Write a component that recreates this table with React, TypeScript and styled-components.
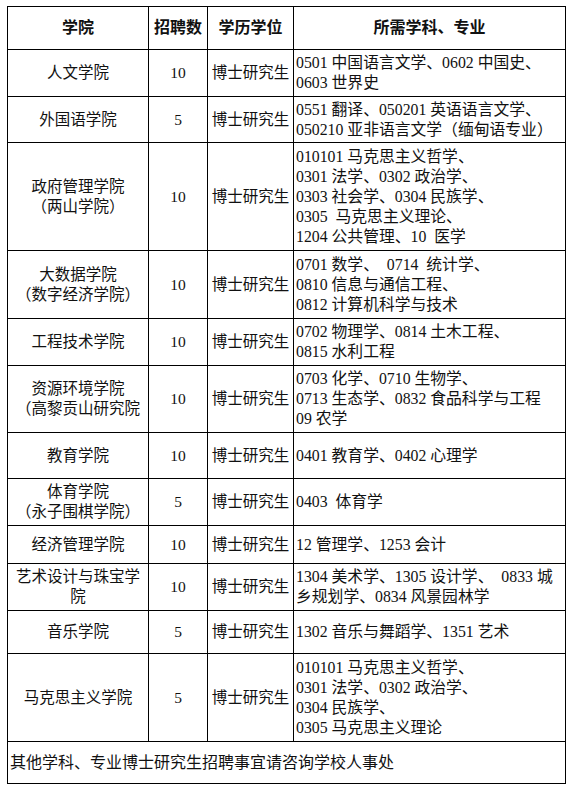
import React from "react";
import styled, { createGlobalStyle } from "styled-components";

const Global = createGlobalStyle`
  html, body { margin: 0; padding: 0; background: #fff; }
  body { font-family: "Liberation Serif", "Noto Sans CJK SC", serif; color: #111; }
`;

const Page = styled.div`
  padding: 6px 0 0 7px;
`;

const Table = styled.table`
  border-collapse: collapse;
  table-layout: fixed;
  width: 558px;
  font-size: 15.5px;
  line-height: 20px;
`;

const Row = styled.tr<{ $h: number }>`
  height: ${(p) => p.$h}px;
`;

const Head = styled.th`
  border: 1px solid #000;
  font-family: "Liberation Serif", "Noto Sans CJK SC", serif;
  font-weight: 700;
  font-size: 16px;
  padding: 0;
  text-align: center;
  vertical-align: middle;
`;

const Cell = styled.td<{ $align?: "left" | "center"; $size?: number }>`
  border: 1px solid #000;
  padding: 0 2px;
  font-size: ${(p) => p.$size ?? 15.5}px;
  text-align: ${(p) => p.$align ?? "center"};
  vertical-align: middle;
  overflow: hidden;
`;

const Line = styled.div`
  white-space: pre;
`;

const Footer = styled.td`
  border: 1px solid #000;
  padding: 0 2px;
  font-size: 16px;
  text-align: left;
  vertical-align: middle;
`;

type Item = { h: number; name: string[]; n: string; subj: string[] };

const rows: Item[] = [
  { h: 47, name: ["人文学院"], n: "10", subj: ["0501 中国语言文学、0602 中国史、", "0603 世界史"] },
  { h: 46, name: ["外国语学院"], n: "5", subj: ["0551 翻译、050201 英语语言文学、", "050210 亚非语言文学（缅甸语专业）"] },
  {
    h: 108,
    name: ["政府管理学院", "（两山学院）"],
    n: "10",
    subj: ["010101 马克思主义哲学、", "0301 法学、0302 政治学、", "0303 社会学、0304 民族学、", "0305  马克思主义理论、", "1204 公共管理、10  医学"],
  },
  {
    h: 68,
    name: ["大数据学院", "（数字经济学院）"],
    n: "10",
    subj: ["0701 数学、  0714  统计学、", "0810 信息与通信工程、", "0812 计算机科学与技术"],
  },
  { h: 47, name: ["工程技术学院"], n: "10", subj: ["0702 物理学、0814 土木工程、", "0815 水利工程"] },
  {
    h: 67,
    name: ["资源环境学院", "（高黎贡山研究院"],
    n: "10",
    subj: ["0703 化学、0710 生物学、", "0713 生态学、0832 食品科学与工程", "09 农学"],
  },
  { h: 46, name: ["教育学院"], n: "10", subj: ["0401 教育学、0402 心理学"] },
  { h: 47, name: ["体育学院", "（永子围棋学院）"], n: "5", subj: ["0403  体育学"] },
  { h: 38, name: ["经济管理学院"], n: "10", subj: ["12 管理学、1253 会计"] },
  { h: 47, name: ["艺术设计与珠宝学", "院"], n: "10", subj: ["1304 美术学、1305 设计学、  0833 城", "乡规划学、0834 风景园林学"] },
  { h: 43, name: ["音乐学院"], n: "5", subj: ["1302 音乐与舞蹈学、1351 艺术"] },
  {
    h: 88,
    name: ["马克思主义学院"],
    n: "5",
    subj: ["010101 马克思主义哲学、", "0301 法学、0302 政治学、", "0304 民族学、", "0305 马克思主义理论"],
  },
];

export default function App() {
  return (
    <Page>
      <Global />
      <Table>
        <colgroup>
          <col style={{ width: 141 }} />
          <col style={{ width: 59 }} />
          <col style={{ width: 86 }} />
          <col style={{ width: 272 }} />
        </colgroup>
        <tbody>
          <Row $h={43}>
            <Head>学院</Head>
            <Head>招聘数</Head>
            <Head>学历学位</Head>
            <Head>所需学科、专业</Head>
          </Row>
          {rows.map((r, i) => (
            <Row key={i} $h={r.h}>
              <Cell>
                {r.name.map((l, j) => (
                  <Line key={j}>{l}</Line>
                ))}
              </Cell>
              <Cell>{r.n}</Cell>
              <Cell>博士研究生</Cell>
              <Cell $align="left" $size={15.8}>
                {r.subj.map((l, j) => (
                  <Line key={j}>{l}</Line>
                ))}
              </Cell>
            </Row>
          ))}
          <Row $h={42}>
            <Footer colSpan={4}>其他学科、专业博士研究生招聘事宜请咨询学校人事处</Footer>
          </Row>
        </tbody>
      </Table>
    </Page>
  );
}
